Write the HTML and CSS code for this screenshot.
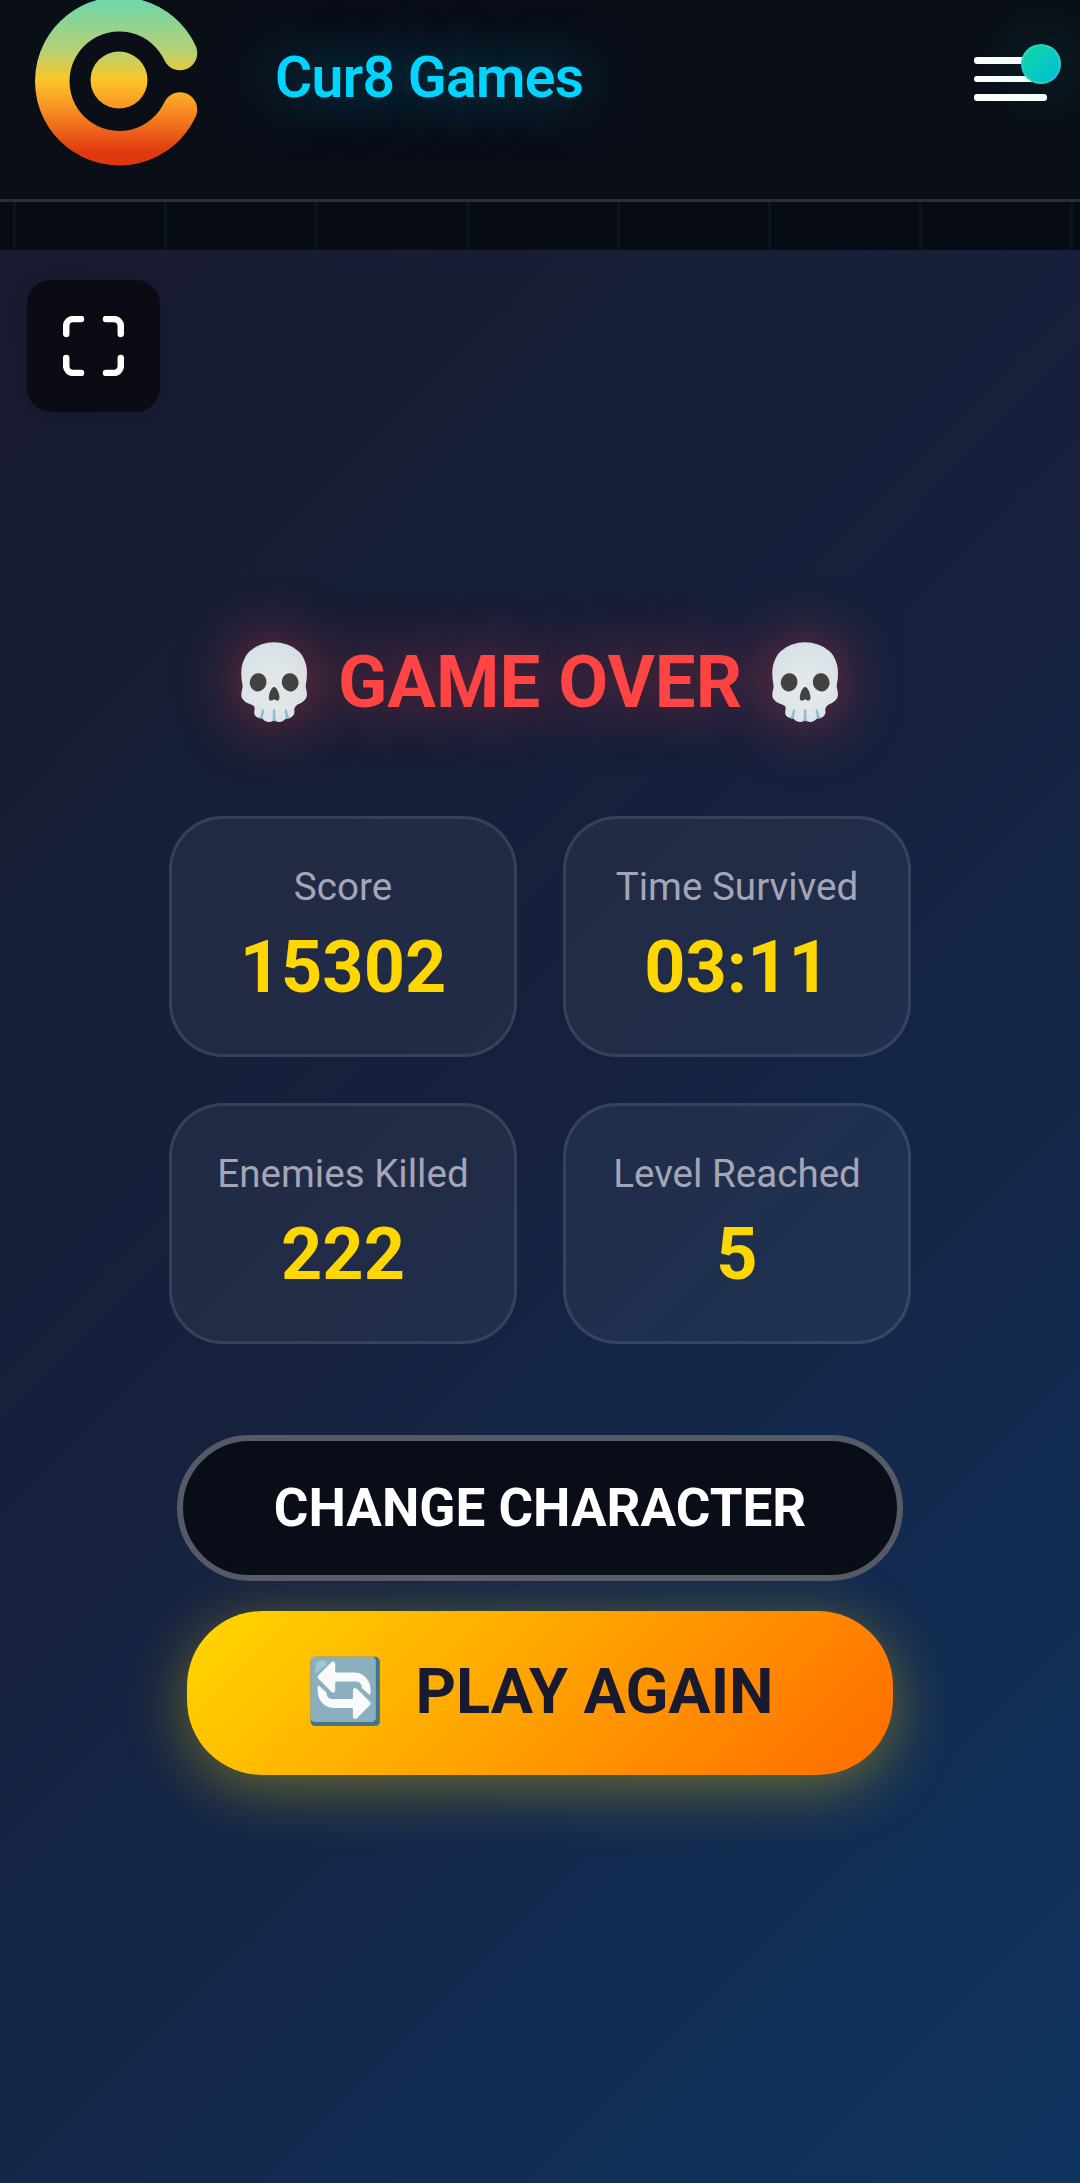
FILE: index.html
```html
<!DOCTYPE html>
<html lang="en">
<head>
<meta charset="utf-8">
<title>Cur8 Games</title>
<link rel="stylesheet" href="styles.css">
</head>
<body>
<header class="header">
  <svg class="logo" viewBox="0 0 200 170" width="200" height="170" aria-hidden="true">
    <defs>
      <linearGradient id="logoGrad" gradientUnits="userSpaceOnUse" x1="0" y1="0" x2="0" y2="166">
        <stop offset="0" stop-color="#6fd6ab"/>
        <stop offset=".3" stop-color="#b4d174"/>
        <stop offset=".48" stop-color="#fcc52a"/>
        <stop offset=".66" stop-color="#f98f24"/>
        <stop offset=".92" stop-color="#e0380f"/>
      </linearGradient>
    </defs>
    <path d="M180 53A67 67 0 1 0 180 109.500" fill="none" stroke="url(#logoGrad)" stroke-width="34.500" stroke-linecap="round"/>
    <circle cx="119" cy="80" r="28.500" fill="url(#logoGrad)"/>
  </svg>
  <h1 class="brand">Cur8 Games</h1>
  <div class="menu">
    <span class="menu-line"></span>
    <span class="menu-line"></span>
    <span class="menu-line"></span>
    <span class="menu-dot"></span>
  </div>
</header>
<div class="ticker"></div>
<main class="game">
  <button class="fullscreen" type="button" aria-label="Fullscreen">
    <svg viewBox="0 0 61 60" width="61" height="60" fill="none" stroke="#fff" stroke-width="6.500" stroke-linecap="round" stroke-linejoin="round" aria-hidden="true">
      <path d="M3.200 18V10a7 7 0 0 1 7-7H18"/>
      <path d="M43 3h7.800a7 7 0 0 1 7 7v8"/>
      <path d="M3.200 42v8a7 7 0 0 0 7 7H18"/>
      <path d="M43 57h7.800a7 7 0 0 0 7-7v-8"/>
    </svg>
  </button>
  <h2 class="over"><span class="emoji">💀</span> GAME OVER <span class="emoji">💀</span></h2>
  <section class="stats">
    <div class="stat"><div class="stat-label">Score</div><div class="stat-value">15302</div></div>
    <div class="stat"><div class="stat-label">Time Survived</div><div class="stat-value">03:11</div></div>
    <div class="stat"><div class="stat-label">Enemies Killed</div><div class="stat-value">222</div></div>
    <div class="stat"><div class="stat-label">Level Reached</div><div class="stat-value">5</div></div>
  </section>
  <button class="btn-change" type="button">CHANGE CHARACTER</button>
  <button class="btn-play" type="button"><span class="emoji">🔄</span><span>PLAY AGAIN</span></button>
</main>
</body>
</html>
```
FILE: styles.css
```css
* { box-sizing: border-box; }
html, body { margin: 0; padding: 0; }
body {
  width: 1080px;
  height: 2183px;
  overflow: hidden;
  font-family: Roboto, "Noto Color Emoji", sans-serif;
  background: linear-gradient(135deg, #1a1a2e 0%, #16213e 50%, #0f3460 100%);
}
.header {
  height: 202px;
  display: flex;
  align-items: flex-start;
  background: #0a0e17;
  border-bottom: 3px solid #2a2e36;
  overflow: hidden;
  position: relative;
}
.logo { flex: none; filter: blur(.7px); }
.brand {
  margin: 47px 0 0 75px;
  font-size: 57px;
  line-height: 62px;
  font-weight: 600;
  letter-spacing: -.7px;
  color: #00d4ff;
  text-shadow: 0 0 60px rgba(0, 212, 255, .5);
}
.menu {
  position: absolute;
  left: 974px;
  top: 57px;
  width: 73px;
  display: flex;
  flex-direction: column;
  gap: 12px;
}
.menu-line { display: block; height: 6.500px; border-radius: 3px; background: #fff; }
.menu-dot {
  position: absolute;
  left: 47px;
  top: -13px;
  width: 40px;
  height: 40px;
  border-radius: 50%;
  background: linear-gradient(135deg, #14d9a0, #00bcdc);
  border: 2px solid rgba(255, 255, 255, .12);
  box-shadow: 0 0 60px rgba(0, 212, 170, .3);
}
.ticker {
  height: 48px;
  background: repeating-linear-gradient(90deg, #070b13 0 13px, #0b151e 13px 16px, #070b13 16px 151px);
}
.game {
  position: relative;
  height: 1933px;
  padding-top: 391px;
  display: flex;
  flex-direction: column;
  align-items: center;
}
.fullscreen {
  position: absolute;
  left: 27px;
  top: 30px;
  width: 133px;
  height: 132px;
  padding: 0;
  border: 0;
  border-radius: 24px;
  background: #0b0b13;
  box-shadow: 0 6px 24px rgba(0, 0, 0, .12);
  display: flex;
  align-items: center;
  justify-content: center;
}
.over {
  margin: 0;
  font-size: 72.500px;
  line-height: 84px;
  font-weight: 700;
  color: #ff4444;
  text-shadow: 0 0 60px rgba(255, 68, 68, .5);
  white-space: pre;
}
.stats {
  margin-top: 91px;
  display: grid;
  grid-template-columns: 348px 348px;
  grid-auto-rows: 241px;
  gap: 46px;
}
.stat {
  border: 3px solid rgba(255, 255, 255, .1);
  border-radius: 54px;
  background: rgba(255, 255, 255, .05);
  text-align: center;
  padding-top: 43px;
}
.stat-label { font-size: 38.600px; line-height: 50px; color: #a4a6b8; }
.stat-value { margin-top: 12.500px; font-size: 72px; line-height: 85px; font-weight: 700; color: #ffd700; }
.btn-change {
  margin-top: 91px;
  width: 726px;
  height: 146px;
  border: 6px solid #555a66;
  border-radius: 75px;
  background: #090d17;
  color: #fff;
  font: 700 53px Roboto, sans-serif;
}
.btn-play {
  margin-top: 30px;
  width: 706px;
  height: 164px;
  padding: 0 0 4px;
  border: 0;
  border-radius: 75px;
  display: flex;
  align-items: center;
  justify-content: center;
  gap: 30.500px;
  background: linear-gradient(135deg, #ffd700, #ff6b00);
  box-shadow: 0 12px 60px rgba(255, 215, 0, .38);
  color: #1a1a2e;
  font: 700 63px Roboto, "Noto Color Emoji", sans-serif;
}
```
